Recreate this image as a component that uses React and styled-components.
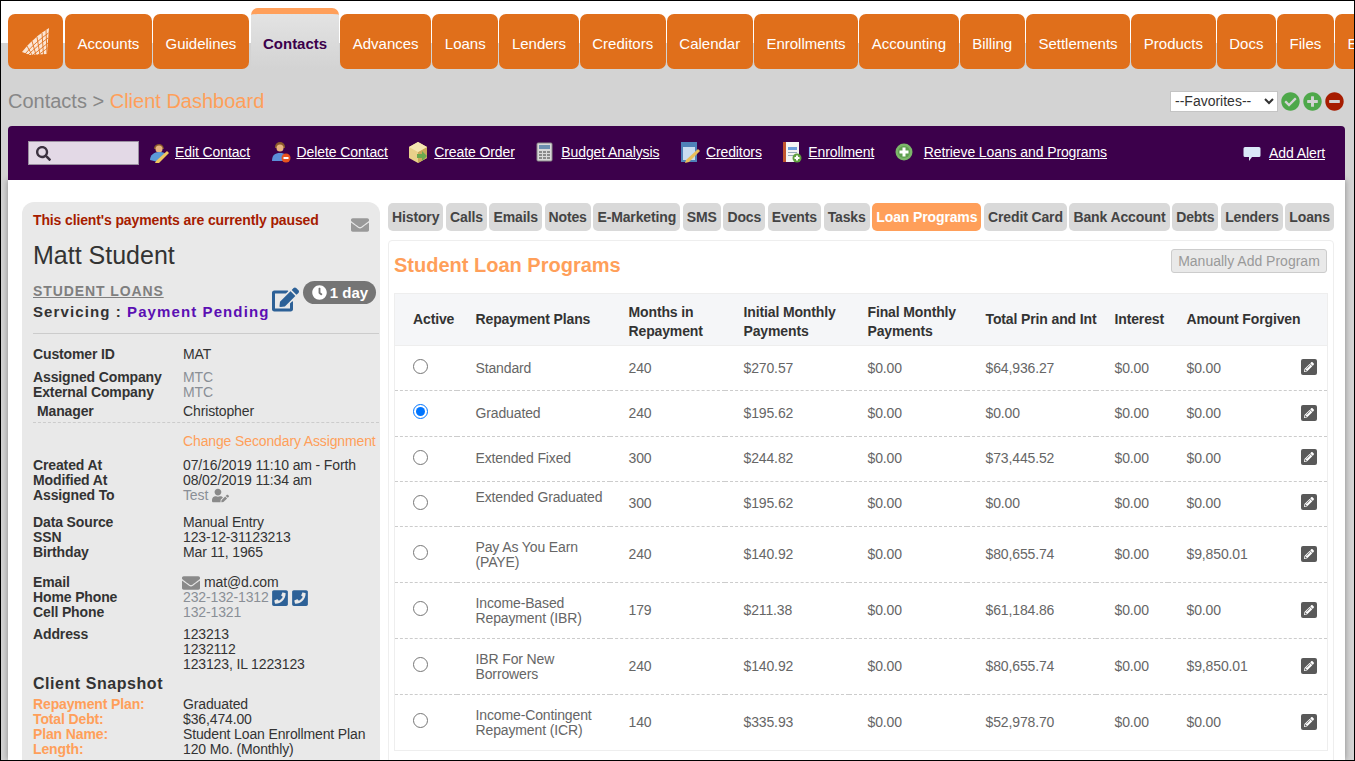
import React from 'react';
import styled, { createGlobalStyle } from 'styled-components';
import { FaCheckCircle, FaPlusCircle, FaMinusCircle, FaSearch, FaEnvelope, FaEdit, FaClock, FaUserEdit, FaPhoneSquare, FaPencilAlt } from 'react-icons/fa';

const Global = createGlobalStyle`
  html, body { margin: 0; padding: 0; }
  body { font-family: "Liberation Sans", Arial, sans-serif; font-size: 14px; color: #333; letter-spacing: -0.13px; }
  * { box-sizing: border-box; }
`;

const Frame = styled.div`
  width: 1355px; height: 761px; border: 1px solid #000; overflow: hidden;
  background: #d3d3d3; display: flex; flex-direction: column;
`;
const NavBar = styled.nav`
  display: flex; gap: 1px; padding: 7px 0 0 7px; height: 68px; align-items: flex-end; flex: none;
  background: linear-gradient(#fff 0 42px, #d3d3d3 42px);
`;
const NavTab = styled.a`
  flex: none; height: 55px; padding: 3px 12.6px 0; display: flex; align-items: center; justify-content: center;
  font-size: 15px; letter-spacing: 0; color: #fff; background: #e06f1b; border-radius: 7px; white-space: nowrap;
`;
const LogoTab = styled(NavTab)` width: 55px; padding: 0; margin-right: 1px; `;
const ActiveTab = styled(NavTab)`
  height: 61px; margin: 0 0 0 1px; padding: 4px 12px 0; font-weight: bold; color: #3c004b;
  border-top: 6px solid #ff9f5a; border-radius: 7px 7px 0 0;
  background: linear-gradient(#e3e3e3, #d3d3d3);
`;
const Crumbs = styled.div`
  flex: none; height: 57px; padding: 7px 10px 0 7px; display: flex; align-items: center; justify-content: space-between;
`;
const CrumbText = styled.div` font-size: 20px; letter-spacing: 0; color: #878787; `;
const CrumbAccent = styled.span` color: #ff9f5a; `;
const Favs = styled.div` display: flex; align-items: center; gap: 3px; `;
const FavSelect = styled.select`
  width: 108px; height: 21px; font: 14px "Liberation Sans", Arial, sans-serif; color: #333;
  background: #fff; border: 1px solid #c4c4c4; padding: 0;
`;
const RoundIcon = styled.span`
  display: flex; color: ${p => p.$c}; font-size: 19px;
`;
const Toolbar = styled.div`
  flex: none; height: 54px; margin: 0 9px 0 7px; padding: 0 20px 2px; background: #3c004b; border-radius: 4px 4px 0 0;
  display: flex; align-items: center; gap: 20.5px; letter-spacing: -0.1px; position: relative; z-index: 1;
`;
const SearchBox = styled.div`
  width: 111px; height: 24px; background: #e3d9e6; border: 1px solid #9a8fa0; color: #3c3240; margin-top: 2px;
  display: flex; align-items: center; padding-left: 7px; font-size: 15px; margin-right: -10.5px;
`;
const ToolItem = styled.a`
  display: flex; align-items: center; gap: ${p => p.$gap || 6}px; color: #fff; white-space: nowrap; font-size: 14px;
  margin-left: ${p => (p.$end ? 'auto' : 0)}; margin-top: ${p => (p.$end ? 2 : 0)}px;
  span { text-decoration: underline; }
`;
const ToolGlyph = styled.svg` width: 20px; height: 22px; flex: none; `;
const Main = styled.main`
  flex: 1; min-height: 0; margin: 0 9px 0 7px; padding: 22px 11px 0 14px; background: #fff;
  display: flex; gap: 8px; align-items: flex-start; box-shadow: 0 0 6px rgba(0,0,0,.35);
`;
const Side = styled.aside`
  width: 358px; flex: none; background: #e9e9e9; border-radius: 12px 12px 0 0; padding: 11px 1px 30px 11px;
`;
const PausedRow = styled.div` display: flex; justify-content: space-between; padding-right: 10px; align-items: flex-start; `;
const Paused = styled.div` font-weight: bold; color: #a61c00; line-height: 15px; `;
const MailIcon = styled.span` color: #999; font-size: 18px; display: flex; margin-top: 3px; `;
const Name = styled.h1` margin: 7px 0 0; font-size: 25px; letter-spacing: 0; line-height: 28px; font-weight: normal; color: #333; `;
const StatusRow = styled.div` display: flex; margin-top: 14px; height: 51px; border-bottom: 1px solid #ccc; width: 346px; `;
const Program = styled.a` display: block; font-weight: bold; font-size: 14px; letter-spacing: 0.9px; color: #7f7f7f; text-decoration: underline; line-height: 17px; `;
const Servicing = styled.div` font-weight: bold; font-size: 15px; letter-spacing: 1.1px; color: #333; margin-top: 3px; line-height: 18px; white-space: nowrap; `;
const Pending = styled.span` color: #5b0fb3; `;
const EditBig = styled.span` color: #2d6197; font-size: 27px; display: flex; margin: 3px 0 0 3px; height: 27px; `;
const Badge = styled.span`
  height: 23px; width: 73px; margin: -2px 0 0 4px; background: #757575; color: #fff; border-radius: 12px; font-weight: bold; font-size: 15px; letter-spacing: 0;
  display: flex; align-items: center; justify-content: center; gap: 3px; svg { font-size: 15px; }
`;
const Group = styled.div` margin-top: ${p => p.$mt || 0}px; `;
const Row = styled.div` display: grid; grid-template-columns: 150px 1fr; line-height: 15px; margin-top: ${p => p.$mt || 0}px; `;
const Label = styled.div` font-weight: bold; color: ${p => p.$accent ? '#ff9f5a' : '#333'}; padding-left: ${p => p.$indent || 0}px; `;
const Value = styled.div` color: ${p => p.$muted ? '#8a8f96' : '#333'}; display: flex; align-items: center; gap: 4px; white-space: nowrap; `;
const Dashed = styled.div` border-top: 1px dashed #ccc; margin-top: 3px; width: 346px; `;
const ChangeLink = styled.a` display: block; margin: 11px 0 0 150px; line-height: 15px; color: #ff9f5a; white-space: nowrap; `;
const InlineIcon = styled.span`
  display: flex; align-items: center; height: 15px; color: ${p => p.$c || '#8a8a8a'}; font-size: ${p => p.$s || 16}px;
  margin-left: ${p => p.$ml || 0}px;
`;
const Snapshot = styled.h3` margin: 4px 0 5px; font-size: 16px; letter-spacing: 0.55px; line-height: 16px; font-weight: bold; color: #333; `;
const Content = styled.section` width: 946px; flex: none; `;
const SubTabs = styled.div` display: flex; justify-content: space-between; margin-top: 1px; `;
const SubTab = styled.a`
  height: 28px; padding: 0 4px; display: flex; align-items: center; font-weight: bold; font-size: 14px; border-radius: 5px; white-space: nowrap;
  color: ${p => p.$active ? '#fff' : '#444'}; background: ${p => p.$active ? '#ff9f5a' : '#d9d9d9'};
`;
const Panel = styled.div` margin-top: 9px; border: 1px solid #eee; border-radius: 4px 4px 0 0; padding: 8px 6px 0 5px; height: 530px; `;
const PanelHead = styled.div` display: flex; justify-content: space-between; align-items: flex-start; height: 44px; `;
const PanelTitle = styled.h2` margin: 4px 0 0; font-size: 20px; letter-spacing: 0; line-height: 24px; font-weight: bold; color: #ff9f5a; `;
const AddButton = styled.button`
  width: 156px; height: 24px; padding: 0; background: #e9e9e9; border: 1px solid #ccc; border-radius: 3px; color: #999;
  font: 14px "Liberation Sans", Arial, sans-serif;
`;
const Table = styled.table` width: 933px; border-collapse: collapse; table-layout: fixed; border: 1px solid #eee; `;
const Th = styled.th`
  height: 52px; padding: ${p => p.$two ? 4 : 0}px 0 0 ${p => p.$first ? 18 : 19}px; text-align: left; font-weight: bold; font-size: 14px; line-height: 19px; color: #333; background: #f5f6f8;
  border-bottom: 1px solid #eee; white-space: nowrap;
`;
const Tr = styled.tr` height: ${p => p.$h}px; border-bottom: 1px dashed #ccc; &:last-child { border-bottom: 1px solid #eee; } `;
const Td = styled.td` padding: 0 0 ${p => p.$up ? 2 : 0}px ${p => p.$first ? 18 : 19}px; color: #666; font-size: 14px; line-height: 15px; vertical-align: middle; `;
const LastCell = styled(Td)` padding-right: 10px; `;
const CellSplit = styled.div` display: flex; justify-content: space-between; align-items: center; `;
const Plan = styled.div` padding-bottom: ${p => p.$raised ? 12 : 0}px; `;
const Radio = styled.input` width: 15px; height: 15px; margin: 0 0 4px; display: block; `;
const EditSquare = styled.button`
  width: 16px; height: 16px; padding: 0; margin-bottom: 2px; border: 0; border-radius: 2px; background: #595959; color: #fff; font-size: 10px;
  display: flex; align-items: center; justify-content: center;
`;

const Logo = () => (
  <svg width="27" height="27" viewBox="0 0 27 27">
    <path d="M0 24C7 15 17 6 27 0L25 26L8 27Z" fill="#fbe6d6" />
    <g fill="none" stroke="#e06f1b" strokeWidth="0.9">
      <path d="M3 26C10 18 18 11 26.500 5M6 27C12 21 19 15 26 10M11 27C16 23 21 19 26 15M16 27C19 25 23 22 25.500 20" />
      <path d="M5 18L10 27M10 13L14 27M15 9L18 27M20 5L21.500 27M24 2L25 27" />
    </g>
  </svg>
);

const icons = {
  edit: <><path d="M5 8a5 5 0 0 1 9-3l1 3z" fill="#8a5a2b" /><circle cx="10" cy="8" r="3.500" fill="#e8b27f" /><path d="M1 19c0-5 4-8 9-8s6 1 7 3l-8 7z" fill="#5b9bd8" /><path d="M7 20l11-10 2 2-10 10-4 0z" fill="#f0c75e" /></>,
  del: <><path d="M4 6a5 5 0 0 1 10 0v1H4z" fill="#8a5a2b" /><circle cx="9" cy="7" r="3.500" fill="#e8b27f" /><path d="M1 20c0-6 3-8 8-8s8 2 8 8z" fill="#5b8fd8" /><circle cx="15" cy="17" r="4.500" fill="#e8541e" /><rect x="12.500" y="16" width="5" height="2" fill="#fff" /></>,
  order: <><path d="M10 1l9 5v11l-9 5-9-5V6z" fill="#e8d08a" /><path d="M10 11l9-5v11l-9 5z" fill="#c9a95a" /><path d="M1 6l9 5 9-5-9-5z" fill="#f6e6b2" /><path d="M9 13h5v-3l5 5-5 5v-3H9z" fill="#6aa84f" /></>,
  budget: <><rect x="2" y="2" width="15" height="18" rx="1" fill="#d9d9d9" stroke="#8a8a8a" /><rect x="4" y="4" width="11" height="4" fill="#6d8fb0" /><path d="M4 10h3v2H4zm4 0h3v2H8zm4 0h3v2h-3zM4 13h3v2H4zm4 0h3v2H8zm4 0h3v2h-3zM4 16h3v2H4zm4 0h3v2H8zm4 0h3v2h-3z" fill="#8a8a8a" /></>,
  cred: <><rect x="1" y="1" width="16" height="20" fill="#4f81b8" /><rect x="3" y="6" width="12" height="13" fill="#c9dcf0" /><path d="M6 19l12-11 2 2-11 11-4 1z" fill="#e9bd5a" /></>,
  enroll: <><rect x="1" y="1" width="3" height="20" fill="#c2552d" /><rect x="4" y="1" width="13" height="20" fill="#f4f4f4" /><rect x="6" y="6" width="9" height="3" fill="#6d9fdc" /><path d="M6 11h9v1H6zm0 3h6v1H6z" fill="#9ab" /><circle cx="15" cy="17" r="4.500" fill="#5f9e3f" /><path d="M14 14.500h2v1.500h1.500v2H16v1.500h-2V18h-1.500v-2H14z" fill="#fff" /></>,
  plus: <><circle cx="9" cy="11" r="8.500" fill="#7cb66a" /><circle cx="9" cy="11" r="6" fill="#5f9e4f" /><path d="M7.500 6.500h3v3h3v3h-3v3h-3v-3h-3v-3h3z" fill="#fff" /></>,
  alert: <path d="M2 5h14a1.500 1.500 0 0 1 1.500 1.500v7A1.500 1.500 0 0 1 16 15H9l-3 4v-4H2A1.500 1.500 0 0 1 .5 13.500v-7A1.500 1.500 0 0 1 2 5z" fill="#dbe9f8" />,
};
const Glyph = ({ n }) => <ToolGlyph viewBox="0 0 20 22">{icons[n]}</ToolGlyph>;

const nav = ['Accounts', 'Guidelines', 'Contacts', 'Advances', 'Loans', 'Lenders', 'Creditors', 'Calendar', 'Enrollments', 'Accounting', 'Billing', 'Settlements', 'Products', 'Docs', 'Files', 'Emails'];
const tools = [['edit', 'Edit Contact'], ['del', 'Delete Contact'], ['order', 'Create Order'], ['budget', 'Budget Analysis'], ['cred', 'Creditors'], ['enroll', 'Enrollment'], ['plus', 'Retrieve Loans and Programs']];
const subTabs = ['History', 'Calls', 'Emails', 'Notes', 'E-Marketing', 'SMS', 'Docs', 'Events', 'Tasks', 'Loan Programs', 'Credit Card', 'Bank Account', 'Debts', 'Lenders', 'Loans'];
const heads = [['Active', 62], ['Repayment Plans', 153], [<>Months in<br />Repayment</>, 115, true], [<>Initial Monthly<br />Payments</>, 124, true], [<>Final Monthly<br />Payments</>, 118, true], ['Total Prin and Int', 129], ['Interest', 72], ['Amount Forgiven', 160]];
const rows = [
  [45, 'Standard', '240', '$270.57', '$64,936.27', '$0.00'],
  [46, 'Graduated', '240', '$195.62', '$0.00', '$0.00', true],
  [45, 'Extended Fixed', '300', '$244.82', '$73,445.52', '$0.00'],
  [45, 'Extended Graduated', '300', '$195.62', '$0.00', '$0.00', false, true],
  [56, <>Pay As You Earn<br />(PAYE)</>, '240', '$140.92', '$80,655.74', '$9,850.01'],
  [56, <>Income-Based<br />Repayment (IBR)</>, '179', '$211.38', '$61,184.86', '$0.00'],
  [56, <>IBR For New<br />Borrowers</>, '240', '$140.92', '$80,655.74', '$9,850.01'],
  [56, <>Income-Contingent<br />Repayment (ICR)</>, '140', '$335.93', '$52,978.70', '$0.00'],
];

export default function App() {
  return (
    <Frame>
      <Global />
      <NavBar>
        <LogoTab><Logo /></LogoTab>
        {nav.map(n => n === 'Contacts' ? <ActiveTab key={n}>{n}</ActiveTab> : <NavTab key={n}>{n}</NavTab>)}
      </NavBar>
      <Crumbs>
        <CrumbText>Contacts &gt; <CrumbAccent>Client Dashboard</CrumbAccent></CrumbText>
        <Favs>
          <FavSelect defaultValue="f"><option value="f">--Favorites--</option></FavSelect>
          <RoundIcon $c="#4ea84a"><FaCheckCircle /></RoundIcon>
          <RoundIcon $c="#4ea84a"><FaPlusCircle /></RoundIcon>
          <RoundIcon $c="#a61c00"><FaMinusCircle /></RoundIcon>
        </Favs>
      </Crumbs>
      <Toolbar>
        <SearchBox><FaSearch /></SearchBox>
        {tools.map(([i, t]) => <ToolItem key={t} $gap={i === 'plus' ? 9 : 6}><Glyph n={i} /><span>{t}</span></ToolItem>)}
        <ToolItem $end $gap={6}><Glyph n="alert" /><span>Add Alert</span></ToolItem>
      </Toolbar>
      <Main>
        <Side>
          <PausedRow>
            <Paused>This client's payments are currently paused</Paused>
            <MailIcon><FaEnvelope /></MailIcon>
          </PausedRow>
          <Name>Matt Student</Name>
          <StatusRow>
            <div>
              <Program>STUDENT LOANS</Program>
              <Servicing>Servicing : <Pending>Payment Pending</Pending></Servicing>
            </div>
            <EditBig><FaEdit /></EditBig>
            <Badge><FaClock />1 day</Badge>
          </StatusRow>
          <Group $mt={13}>
            <Row><Label>Customer ID</Label><Value>MAT</Value></Row>
            <Row $mt={8}><Label>Assigned Company</Label><Value $muted>MTC</Value></Row>
            <Row><Label>External Company</Label><Value $muted>MTC</Value></Row>
            <Row $mt={4}><Label $indent={4}>Manager</Label><Value>Christopher</Value></Row>
            <Dashed />
          </Group>
          <ChangeLink>Change Secondary Assignment</ChangeLink>
          <Group $mt={9}>
            <Row><Label>Created At</Label><Value>07/16/2019 11:10 am - Forth</Value></Row>
            <Row><Label>Modified At</Label><Value>08/02/2019 11:34 am</Value></Row>
            <Row><Label>Assigned To</Label><Value $muted>Test <InlineIcon $s={17}><FaUserEdit /></InlineIcon></Value></Row>
          </Group>
          <Group $mt={12}>
            <Row><Label>Data Source</Label><Value>Manual Entry</Value></Row>
            <Row><Label>SSN</Label><Value>123-12-31123213</Value></Row>
            <Row><Label>Birthday</Label><Value>Mar 11, 1965</Value></Row>
          </Group>
          <Group $mt={15}>
            <Row><Label>Email</Label><Value><InlineIcon $s={18} $ml={-1}><FaEnvelope /></InlineIcon>mat@d.com</Value></Row>
            <Row><Label>Home Phone</Label><Value $muted>232-132-1312<InlineIcon $c="#2d6197" $s={18} $ml={-2}><FaPhoneSquare /></InlineIcon><InlineIcon $c="#2d6197" $s={18} $ml={-2}><FaPhoneSquare /></InlineIcon></Value></Row>
            <Row><Label>Cell Phone</Label><Value $muted>132-1321</Value></Row>
          </Group>
          <Group $mt={7}>
            <Row><Label>Address</Label><Value>123213</Value></Row>
            <Row><Label /><Value>1232112</Value></Row>
            <Row><Label /><Value>123123, IL 1223123</Value></Row>
          </Group>
          <Snapshot>Client Snapshot</Snapshot>
          <Group>
            <Row><Label $accent>Repayment Plan:</Label><Value>Graduated</Value></Row>
            <Row><Label $accent>Total Debt:</Label><Value>$36,474.00</Value></Row>
            <Row><Label $accent>Plan Name:</Label><Value>Student Loan Enrollment Plan</Value></Row>
            <Row><Label $accent>Length:</Label><Value>120 Mo. (Monthly)</Value></Row>
          </Group>
        </Side>
        <Content>
          <SubTabs>
            {subTabs.map(t => <SubTab key={t} $active={t === 'Loan Programs'}>{t}</SubTab>)}
          </SubTabs>
          <Panel>
            <PanelHead>
              <PanelTitle>Student Loan Programs</PanelTitle>
              <AddButton>Manually Add Program</AddButton>
            </PanelHead>
            <Table>
              <colgroup>{heads.map(([, w], i) => <col key={i} style={{ width: w }} />)}</colgroup>
              <thead><tr>{heads.map(([h, , two], i) => <Th key={i} $two={two} $first={i === 0}>{h}</Th>)}</tr></thead>
              <tbody>
                {rows.map(([h, plan, months, init, total, forgiven, active, raised], i) => {
                  const up = i === 2 || i === 3;
                  return (
                    <Tr key={i} $h={h}>
                      <Td $first><Radio type="radio" name="plan" defaultChecked={!!active} /></Td>
                      <Td $up={up}><Plan $raised={raised}>{plan}</Plan></Td>
                      <Td $up={up}>{months}</Td>
                      <Td $up={up}>{init}</Td>
                      <Td $up={up}>$0.00</Td>
                      <Td $up={up}>{total}</Td>
                      <Td $up={up}>$0.00</Td>
                      <LastCell $up={up}><CellSplit>{forgiven}<EditSquare aria-label="Edit"><FaPencilAlt /></EditSquare></CellSplit></LastCell>
                    </Tr>
                  );
                })}
              </tbody>
            </Table>
          </Panel>
        </Content>
      </Main>
    </Frame>
  );
}
